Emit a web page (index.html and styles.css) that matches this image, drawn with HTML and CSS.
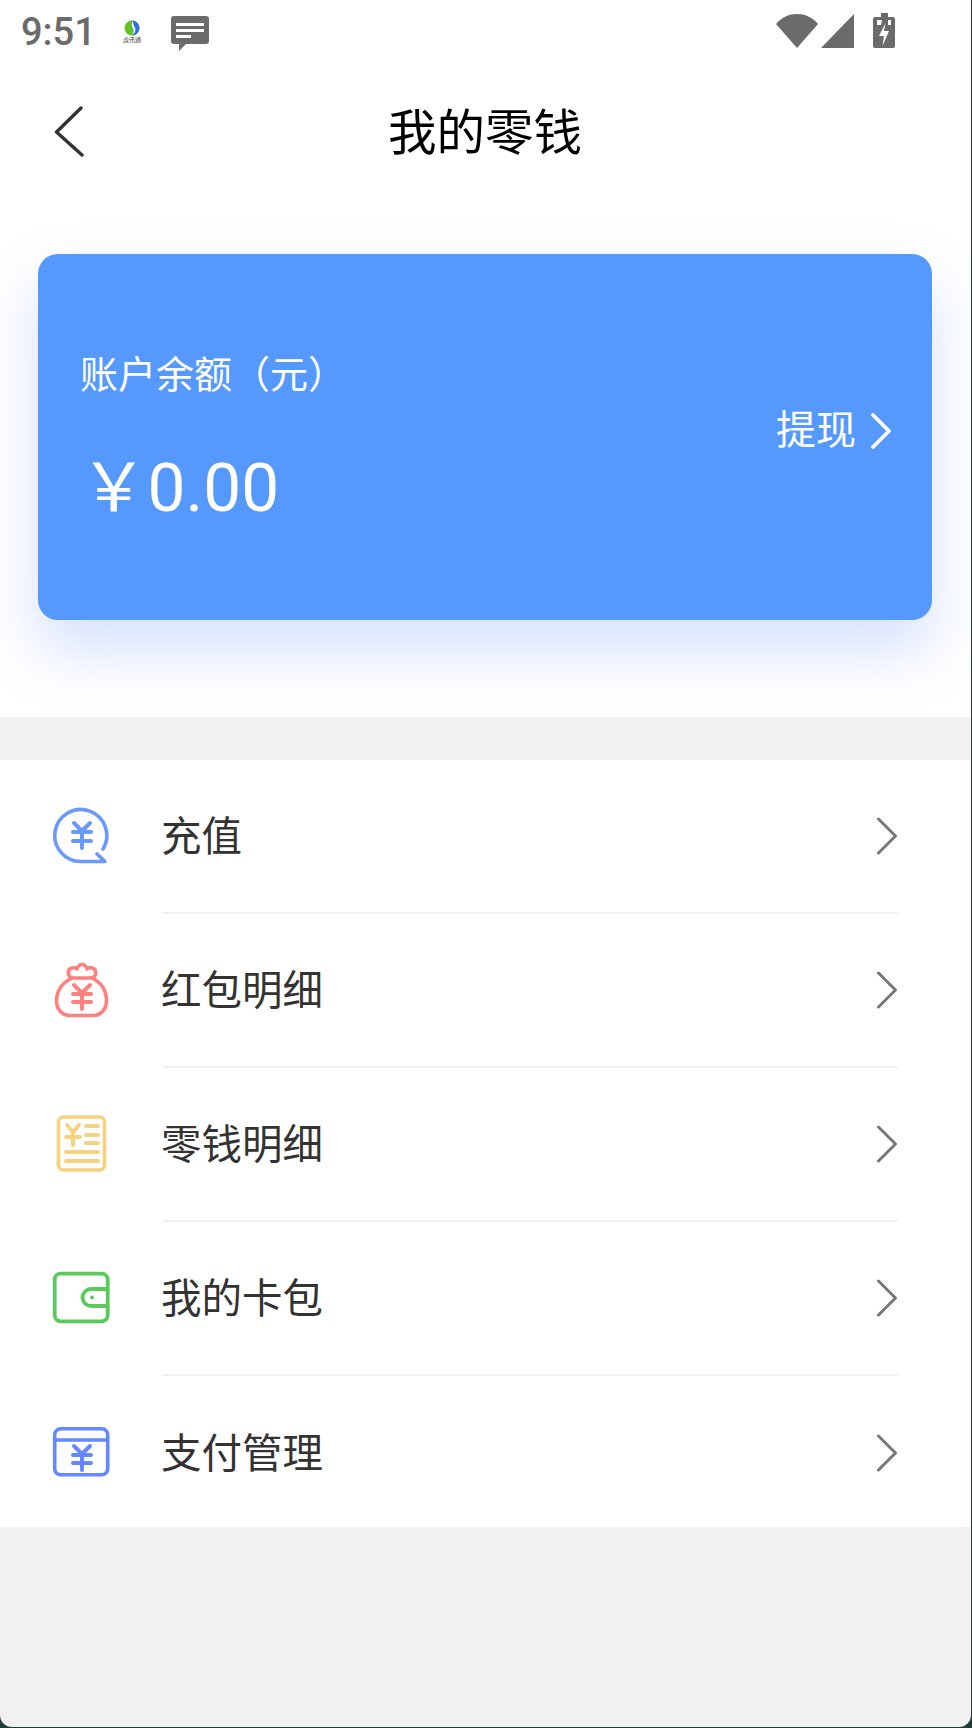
FILE: index.html
```html
<!DOCTYPE html>
<html lang="zh-CN">
<head>
<meta charset="utf-8">
<title>我的零钱</title>
<link rel="stylesheet" href="styles.css">
</head>
<body>
<div class="screen">
  <div class="top">
    <div class="status">
      <span class="time">9:51</span>
      <span class="applogo">
        <svg class="logo-mark" width="16" height="16" viewBox="0 0 16 16"><circle cx="8" cy="8" r="7.5" fill="#5fc41f"/><path d="M8 .5A7.5 7.5 0 0 1 8 15.500C11 13 9 10 8 8 7 5.500 8 3 8 .5Z" fill="#2f6fe0"/><path d="M9 1C6.500 4 8 6.500 9 8.500 10 10.500 10 13 7.500 15 11.500 13 12 10 11 8 10 6 9 4 9 1Z" fill="#fff"/></svg>
        <span class="logo-text">虎讯通</span>
      </span>
      <svg class="msg" width="38" height="35" viewBox="0 0 38 35"><path d="M3 0H35a3 3 0 0 1 3 3V25a3 3 0 0 1-3 3H15L8 35V28H3a3 3 0 0 1-3-3V3a3 3 0 0 1 3-3Z" fill="#6b6b6b"/><path d="M5 7h28v3H5zM5 13h28v3H5zM5 19h15v3H5z" fill="#fff"/></svg>
      <span class="status-right">
        <svg width="42" height="35" viewBox="0 0 42 35"><path d="M0 11C6 4 13 1 21 1s15 3 21 10L21 35Z" fill="#6b6b6b"/></svg>
        <svg class="signal" width="34" height="35" viewBox="0 0 34 35"><path d="M0 35 33 1V35Z" fill="#6b6b6b"/></svg>
        <svg class="battery" width="22" height="36" viewBox="0 0 22 36"><path d="M8 0h7v4h5a2 2 0 0 1 2 2V33a2 2 0 0 1-2 2H2a2 2 0 0 1-2-2V6a2 2 0 0 1 2-2h6Z" fill="#6b6b6b"/><path d="M4 7h5l-1 5H4zM15 7h3v5h-3zM12.500 10 6 23h5l-1.500 10L16 18h-5Z" fill="#fff"/></svg>
      </span>
    </div>
    <div class="nav">
      <svg class="back" width="30" height="52" viewBox="0 0 30 52"><path d="M27 2 2.500 26 28 49" fill="none" stroke="#333" stroke-width="3.400" stroke-linecap="round" stroke-linejoin="round"/></svg>
      <h1 class="title">我的零钱</h1>
    </div>
  </div>

  <div class="hero">
    <div class="card">
      <div class="balance">
        <div class="balance-label">账户余额（元）</div>
        <div class="balance-value">￥<span class="num">0.00</span></div>
      </div>
      <div class="withdraw">
        <span>提现</span>
        <svg width="22" height="36" viewBox="0 0 22 36"><path d="M3 2 19 18 3 34" fill="none" stroke="#fff" stroke-width="3.800" stroke-linecap="round" stroke-linejoin="round"/></svg>
      </div>
    </div>
  </div>

  <div class="list">
    <div class="row">
      <svg class="icon" width="60" height="60" viewBox="0 0 60 60" fill="none" stroke="#6a98fb" stroke-width="3.600" stroke-linecap="round" stroke-linejoin="round"><path d="M51 42A26 26 0 1 0 29.500 54.500H53L45 47"/><path stroke-width="4" d="M22 16 30 24 38 16M21 25H39M21 34H39M30 24V41"/></svg>
      <div class="row-body"><span class="row-text">充值</span><svg class="chev" width="22" height="38" viewBox="0 0 22 38"><path d="M2.500 2 19.500 19 2.500 36" fill="none" stroke="#777" stroke-width="3" stroke-linecap="round" stroke-linejoin="round"/></svg></div>
    </div>
    <div class="row">
      <svg class="icon" width="60" height="60" viewBox="0 0 60 60" fill="none" stroke="#ff8080" stroke-width="3.600" stroke-linecap="round" stroke-linejoin="round"><path d="M20 17C15 15 15 8 20 7 23 6 24 7 25 8 27 2 33 2 35 8 36 7 37 6 40 7 45 8 45 15 40 17Z"/><path d="M20 17C10 22 4.500 30 4.500 40 4.500 49 11 54.500 18 54.500H41C48 54.500 54.500 49 54.500 40 54.500 30 50 22 40 17"/><path stroke-width="4" d="M22 24 30 32 38 24M21 33H39M21 41H39M30 32V48"/></svg>
      <div class="row-body"><span class="row-text">红包明细</span><svg class="chev" width="22" height="38" viewBox="0 0 22 38"><path d="M2.500 2 19.500 19 2.500 36" fill="none" stroke="#777" stroke-width="3" stroke-linecap="round" stroke-linejoin="round"/></svg></div>
    </div>
    <div class="row">
      <svg class="icon" width="60" height="60" viewBox="0 0 60 60" fill="none" stroke="#f6d27e" stroke-width="3.600" stroke-linecap="round" stroke-linejoin="round"><rect x="6.500" y="2" width="46" height="53" rx="5"/><path stroke-width="4" d="M15 10 21 17 27 10M14 22H28M21 17V30M34 11H46M34 20H46M34 28H46M14 37H46M14 46H46"/></svg>
      <div class="row-body"><span class="row-text">零钱明细</span><svg class="chev" width="22" height="38" viewBox="0 0 22 38"><path d="M2.500 2 19.500 19 2.500 36" fill="none" stroke="#777" stroke-width="3" stroke-linecap="round" stroke-linejoin="round"/></svg></div>
    </div>
    <div class="row">
      <svg class="icon" width="60" height="60" viewBox="0 0 60 60" fill="none" stroke="#5cc95c" stroke-width="3.800" stroke-linecap="round" stroke-linejoin="round"><rect x="2.700" y="4.700" width="53" height="47.600" rx="6"/><path d="M55 20H39A8.500 8.500 0 0 0 39 37H55"/><circle cx="40" cy="28.500" r="1" stroke-width="2"/></svg>
      <div class="row-body"><span class="row-text">我的卡包</span><svg class="chev" width="22" height="38" viewBox="0 0 22 38"><path d="M2.500 2 19.500 19 2.500 36" fill="none" stroke="#777" stroke-width="3" stroke-linecap="round" stroke-linejoin="round"/></svg></div>
    </div>
    <div class="row">
      <svg class="icon" width="60" height="60" viewBox="0 0 60 60" fill="none" stroke="#6488ff" stroke-width="3.600" stroke-linecap="round" stroke-linejoin="round"><rect x="2.700" y="5.700" width="53" height="46" rx="6"/><path d="M3 17H55"/><path stroke-width="4" d="M22 23 30 31 38 23M21 32H39M21 40H39M30 31V47"/></svg>
      <div class="row-body"><span class="row-text">支付管理</span><svg class="chev" width="22" height="38" viewBox="0 0 22 38"><path d="M2.500 2 19.500 19 2.500 36" fill="none" stroke="#777" stroke-width="3" stroke-linecap="round" stroke-linejoin="round"/></svg></div>
    </div>
  </div>
</div>
</body>
</html>
```

FILE: styles.css
```css
* { box-sizing: border-box; }
html, body {
  margin: 0;
  padding: 0;
  width: 972px;
  height: 1728px;
  overflow: hidden;
  background: #1f3d38;
}
body {
  font-family: Roboto, "Noto Sans CJK SC", sans-serif;
}
.screen {
  width: 971px;
  height: 1727px;
  background: #f1f1f1;
  border-radius: 0 0 12px 12px;
  overflow: hidden;
}
.top { background: #fff; }
.status {
  height: 66px;
  display: flex;
  align-items: center;
  padding: 0 0 2px 21px;
  color: #6b6b6b;
}
.time {
  font-size: 38px;
  font-weight: 500;
  line-height: 1;
  width: 70px;
}
.applogo {
  display: flex;
  flex-direction: column;
  align-items: center;
  width: 24px;
  margin-left: 29px;
}
.logo-text {
  font-size: 6px;
  line-height: 8px;
  color: #333;
  white-space: nowrap;
}
.msg { margin-left: 27px; margin-top: 2px; }
.status-right {
  margin-left: auto;
  margin-right: 76px;
  display: flex;
  align-items: flex-start;
  margin-top: -3px;
}
.signal { margin-left: 3px; }
.battery { margin-left: 18px; }
.nav {
  height: 132px;
  display: flex;
  align-items: center;
  justify-content: center;
  position: relative;
}
.back { position: absolute; left: 54px; top: 40px; }
.title {
  margin: 4px 1px 0 0;
  font-size: 48.5px;
  font-weight: 400;
  line-height: 1;
  color: #000;
}
.hero {
  background: #fff;
  padding: 56px 39px 97px 38px;
}
.card {
  height: 366px;
  background: #5599ff;
  border-radius: 20px;
  box-shadow: 0 30px 60px rgba(85, 130, 245, 0.25);
  display: flex;
  align-items: center;
  justify-content: space-between;
  padding: 0 40px 0 42px;
  color: #fff;
}
.balance { margin-top: 4px; }
.balance-label {
  font-size: 38px;
  line-height: 44px;
}
.balance-value {
  margin-top: 53px;
  font-size: 67.5px;
  line-height: 76px;
  white-space: nowrap;
}
.withdraw {
  display: flex;
  align-items: center;
  gap: 14px;
  font-size: 40px;
  line-height: 48px;
  margin-top: -12px;
}
.list {
  margin-top: 43px;
  background: #fff;
}
.row {
  height: 154px;
  display: flex;
  align-items: center;
  gap: 50px;
  padding: 0 73px 0 52px;
}
.row:last-child { height: 151px; padding-top: 3px; }
.icon { flex: none; }
.row-body {
  flex: 1;
  height: 100%;
  display: flex;
  align-items: center;
  justify-content: space-between;
  border-bottom: 2px solid #f2f2f2;
}
.row:last-child .row-body { border-bottom: 0; }
.row-text {
  font-size: 40.5px;
  line-height: 48px;
  color: #333;
  margin: 1px 0 0 -1px;
}
```
